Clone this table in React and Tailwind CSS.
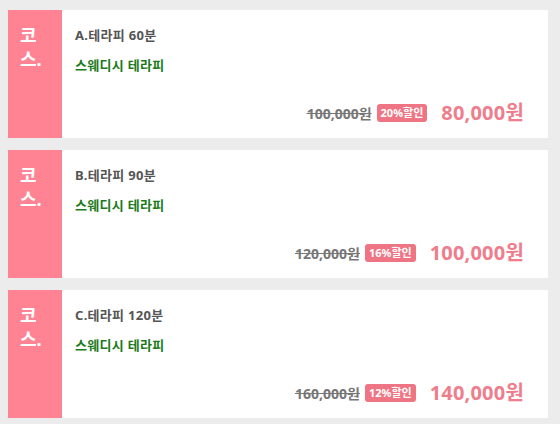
import React from 'react';

const courses = [
  { title: 'A.테라피 60분', original: '100,000원', rate: '20%할인', price: '80,000원' },
  { title: 'B.테라피 90분', original: '120,000원', rate: '16%할인', price: '100,000원' },
  { title: 'C.테라피 120분', original: '160,000원', rate: '12%할인', price: '140,000원' },
];

const CourseCard = ({ course }) => (
  <div className="flex h-[128px] bg-white">
    <div className="w-[54px] shrink-0 bg-[#ff8393] pl-[12px] pt-[13px] text-[18px] font-bold leading-[24px] text-white">
      <div>코</div>
      <div>스.</div>
    </div>
    <div className="flex flex-1 flex-col pl-[13px] pr-[24px] pt-[16px]">
      <div className="text-[13px] font-bold leading-[18px] tracking-[0.3px] text-[#555]">{course.title}</div>
      <div className="mt-[12px] text-[13px] font-bold leading-[18px] tracking-[0.3px] text-[#1b7a1b]">스웨디시 테라피</div>
      <div className="mt-auto mb-[12px] flex items-center justify-end">
        <span className="text-[14px] font-bold text-[#777] line-through">{course.original}</span>
        <span className="ml-[5px] rounded-[3px] bg-[#ef7584] px-[4px] text-[11px] font-bold leading-[18px] text-white">{course.rate}</span>
        <span className="ml-[14px] text-[20px] font-bold leading-[26px] tracking-[0.2px] text-[#ef7d8b]">{course.price}</span>
      </div>
    </div>
  </div>
);

export default function App() {
  return (
    <div
      className="flex min-h-[424px] flex-col gap-[12px] bg-[#ececec] px-[8px] pt-[10px] pr-[12px]"
      style={{ fontFamily: '"Noto Sans", "Noto Sans CJK KR", sans-serif' }}
    >
      {courses.map((c) => (
        <CourseCard key={c.title} course={c} />
      ))}
    </div>
  );
}
